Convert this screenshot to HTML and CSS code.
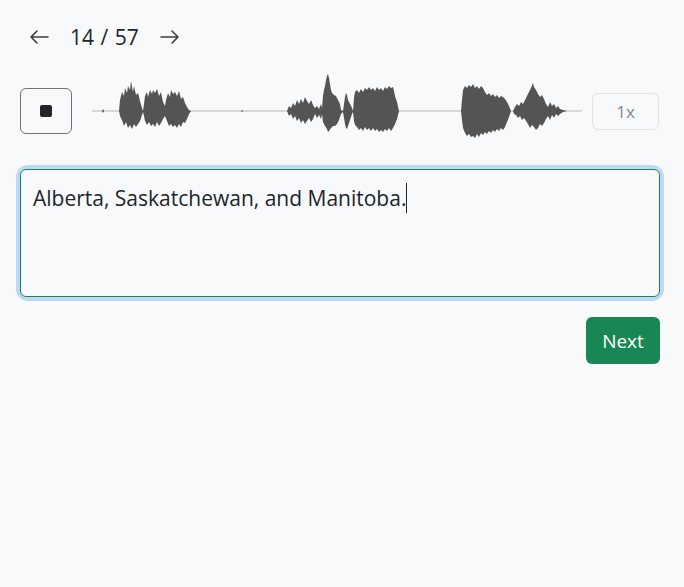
FILE: index.html
```html
<!DOCTYPE html>
<html lang="en">
<head>
<meta charset="utf-8">
<title>Transcription</title>
<link rel="stylesheet" href="styles.css">
</head>
<body>
<main class="app">
  <nav class="pager">
    <button class="arrow" aria-label="Previous">
      <svg width="20" height="14" viewBox="0 0 20 14"><path d="M19 7H2M8 1L2 7l6 6" fill="none" stroke="#3d3d3d" stroke-width="1.6" stroke-linecap="round" stroke-linejoin="round"/></svg>
    </button>
    <span class="count">14 / 57</span>
    <button class="arrow" aria-label="Next">
      <svg width="20" height="14" viewBox="0 0 20 14"><path d="M1 7h17M12 1l6 6-6 6" fill="none" stroke="#3d3d3d" stroke-width="1.6" stroke-linecap="round" stroke-linejoin="round"/></svg>
    </button>
  </nav>

  <section class="player">
    <button class="stop" aria-label="Stop"><span class="stop-square"></span></button>
    <svg class="wave" width="490" height="80" viewBox="92 71 490 80" preserveAspectRatio="none">
      <line x1="92" y1="111" x2="582" y2="111" stroke="#b4b4b4" stroke-width="1"/>
      <line x1="560" y1="111" x2="582" y2="111" stroke="#dcdcdc" stroke-width="1"/>
      <path fill="#545454" d="M102 111 L103 109 L104 111 L103 113 Z"/>
      <path fill="#545454" d="M241 111 L242 110 L243 111 L242 112 Z"/>
      <path fill="#545454" d="M119,111 L120,100 122,92 124,96 125,88 127,93 128,86 130,90 131,81 133,92 134,86 136,95 138,93 140,101 142,108 143,111 144,104 145,96 147,92 148,97 150,90 152,94 153,90 155,93 157,89 159,96 161,92 163,102 165,106 166,100 168,93 170,97 171,90 173,94 175,92 177,96 179,91 181,99 183,97 185,103 187,107 189,110 191,111 189,114 187,119 185,123 183,122 181,127 179,124 177,128 175,125 173,127 171,124 169,126 167,121 165,116 163,119 161,123 159,126 157,122 155,127 153,124 151,126 149,122 147,125 145,121 144,116 143,112 142,115 140,121 138,124 136,127 134,124 132,129 130,125 128,128 126,122 124,126 122,120 120,116 Z"/>
      <path fill="#545454" d="M287,111 L289,106 291,108 293,103 295,106 297,100 299,104 301,99 303,103 305,97 307,101 309,104 311,100 313,105 315,108 317,106 319,109 321,104 322,108 323,96 324,90 325,86 326,80 327,76 328,74 329,78 330,84 331,90 332,93 334,95 336,96 338,100 340,104 341,110 343,111 344,104 345,97 346,93 347,95 348,100 350,104 352,108 353,111 354,98 355,92 357,90 359,93 361,89 363,92 365,88 367,90 369,87 371,90 373,88 375,91 377,87 379,90 381,88 383,91 385,87 387,89 389,86 391,88 393,87 394,91 395,96 397,102 399,111 397,119 395,124 393,128 391,131 389,128 387,131 385,129 383,132 381,130 379,132 377,129 375,131 373,128 371,131 369,128 367,130 365,127 363,131 361,128 359,130 357,127 355,125 354,121 353,112 352,114 350,120 348,126 347,129 346,128 345,124 344,118 343,112 341,114 339,120 337,124 335,126 333,126 331,128 329,131 328,132 327,129 325,126 323,122 322,114 321,119 319,115 317,118 315,114 313,119 311,122 309,118 307,121 305,124 303,120 301,123 299,118 297,121 295,116 293,119 291,114 289,116 Z"/>
      <path fill="#545454" d="M461,111 L462,100 463,90 465,86 467,88 469,85 471,87 473,84 475,88 477,86 479,89 481,86 483,88 485,92 487,95 489,93 491,96 493,94 495,97 497,95 499,98 501,96 503,97 505,99 507,102 509,106 511,111 509,117 507,122 505,127 503,130 501,128 499,131 497,129 495,132 493,130 491,133 489,131 487,134 485,132 483,135 481,133 479,137 477,134 475,138 473,136 471,137 469,134 467,136 465,133 463,128 462,120 Z"/>
      <path fill="#545454" d="M513,111 L515,107 517,104 519,106 521,102 523,104 525,100 527,96 529,92 531,88 533,83 534,87 536,90 538,94 540,97 542,95 544,99 546,104 548,107 550,102 552,106 554,104 556,108 558,106 560,109 563,110 567,111 563,112 560,114 558,116 556,114 554,118 552,115 550,120 548,116 546,119 544,123 542,126 540,124 538,128 536,130 534,127 532,125 530,128 528,124 526,121 524,118 522,120 520,116 518,118 516,115 514,114 Z"/>
    </svg>
    <button class="speed">1x</button>
  </section>

  <div class="field">
    <div class="input">Alberta, Saskatchewan, and Manitoba.<span class="caret"></span></div>
  </div>

  <div class="actions">
    <button class="next">Next</button>
  </div>
</main>
</body>
</html>
```

FILE: styles.css
```css
* {
  box-sizing: border-box;
}

body {
  margin: 0;
  background: #f8f9fb;
  color: #212529;
  font-family: "Open Sans", "Noto Sans", sans-serif;
}

.app {
  padding: 22px 24px 0 20px;
}

button {
  font-family: inherit;
  cursor: pointer;
}

.pager {
  display: flex;
  align-items: center;
  height: 30px;
  padding-left: 9px;
}

.arrow {
  border: 0;
  background: none;
  padding: 0;
  width: 20px;
  height: 30px;
  display: flex;
  align-items: center;
}

.count {
  font-size: 21px;
  margin: 0 21px 0 21px;
  word-spacing: 1px;
}

.player {
  display: flex;
  align-items: center;
  margin-top: 36px;
  height: 46px;
}

.stop {
  width: 52px;
  height: 46px;
  border: 1px solid #6c757d;
  border-radius: 6px;
  background: transparent;
  display: flex;
  align-items: center;
  justify-content: center;
  padding: 0;
  flex: none;
}

.stop-square {
  width: 12px;
  height: 12px;
  border-radius: 2px;
  background: #212529;
}

.wave {
  margin-left: 20px;
  flex: none;
  display: block;
}

.speed {
  margin-left: 10px;
  width: 67px;
  height: 37px;
  border: 1px solid #e1e3e6;
  border-radius: 6px;
  background: transparent;
  color: #85888c;
  font-size: 17px;
  padding: 0;
  flex: none;
}

.field {
  margin-top: 35px;
  border-radius: 8px;
  box-shadow: 0 0 0 4px #bfd8f7;
}

.input {
  height: 128px;
  border: 1px solid #198754;
  border-radius: 6px;
  padding: 13px 12px;
  font-size: 21px;
  line-height: 30px;
  background: #f8f9fb;
}

.caret {
  display: inline-block;
  width: 1px;
  height: 30px;
  background: #212529;
  vertical-align: top;
}

.actions {
  display: flex;
  justify-content: flex-end;
  margin-top: 20px;
}

.next {
  width: 74px;
  height: 47px;
  border: 0;
  border-radius: 6px;
  background: #198754;
  color: #fff;
  font-size: 19px;
  padding: 0;
}
```
